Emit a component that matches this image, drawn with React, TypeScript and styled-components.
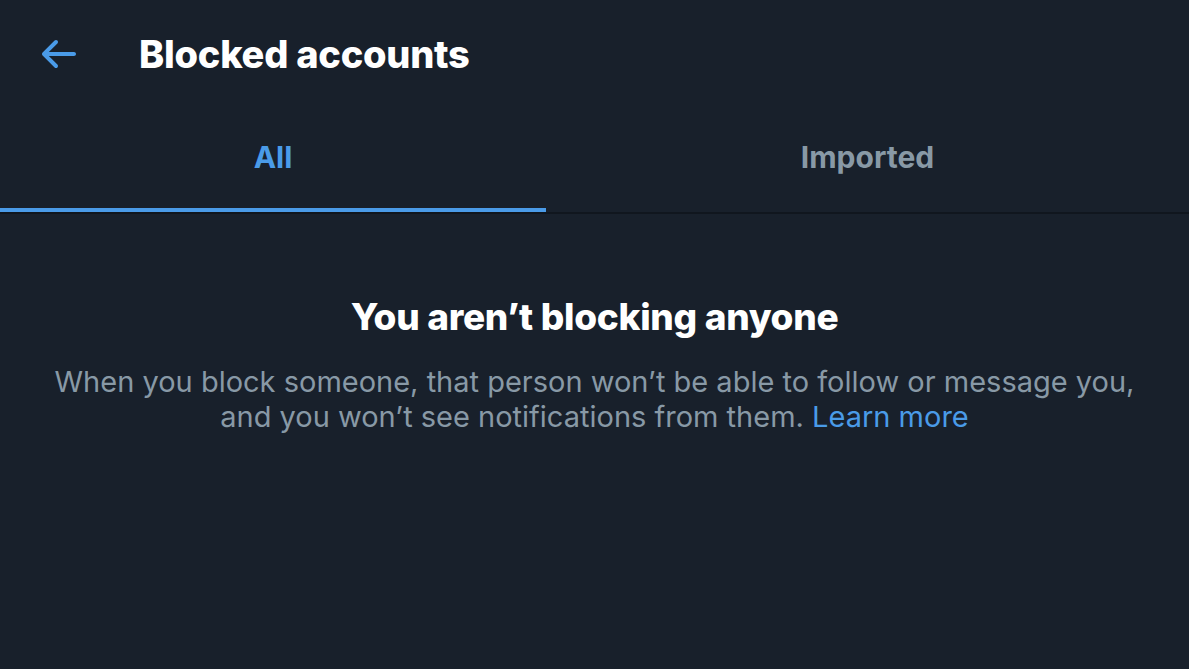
import React from "react";
import styled, { createGlobalStyle } from "styled-components";

const GlobalStyle = createGlobalStyle`
    html, body {
        margin: 0;
        padding: 0;
        background: #18202b;
    }
    body {
        font-family: Inter, "Noto Sans", sans-serif;
        -webkit-font-smoothing: antialiased;
    }
`;

const Page = styled.div`
    width: 1189px;
    height: 669px;
    background: #18202b;
    display: flex;
    flex-direction: column;
    overflow: hidden;
`;

const Header = styled.header`
    height: 106px;
    display: flex;
    align-items: center;
    padding-left: 34px;
    box-sizing: border-box;
`;

const BackButton = styled.button`
    width: 48px;
    height: 48px;
    padding: 0;
    border: none;
    background: transparent;
    color: #4a9be8;
    display: flex;
    align-items: center;
    justify-content: center;
    cursor: pointer;
    margin-top: 2px;

    svg {
        width: 48px;
        height: 48px;
    }
`;

const Title = styled.h1`
    margin: 2px 0 0 57px;
    font-size: 38px;
    font-weight: 800;
    color: #ffffff;
    letter-spacing: -0.25px;
`;

const TabBar = styled.nav`
    display: flex;
    height: 106px;
    border-bottom: 2px solid #10161e;
`;

const Tab = styled.div<{ $active?: boolean }>`
    flex: ${(p) => (p.$active ? "0 0 546px" : "1")};
    position: relative;
    display: flex;
    align-items: center;
    justify-content: center;
    font-size: 30px;
    font-weight: 700;
    color: ${(p) => (p.$active ? "#4a9be8" : "#8899a6")};
    padding-bottom: 4px;

    &::after {
        content: "";
        display: ${(p) => (p.$active ? "block" : "none")};
        position: absolute;
        left: 0;
        right: 0;
        bottom: 0;
        height: 4px;
        background: #4a9be8;
    }
`;

const Empty = styled.section`
    display: flex;
    flex-direction: column;
    align-items: center;
    text-align: center;
    padding-top: 80px;
`;

const EmptyTitle = styled.h2`
    margin: 0;
    font-size: 37px;
    font-weight: 800;
    color: #ffffff;
    letter-spacing: -0.3px;
`;

const EmptyText = styled.p`
    margin: 25px 0 0;
    font-size: 29px;
    line-height: 35px;
    font-weight: 400;
    color: #8899a6;
`;

const LearnMore = styled.a`
    color: #4a9be8;
    text-decoration: none;
`;

const ArrowIcon: React.FC = () => (
    <svg viewBox="0 0 24 24" fill="currentColor" aria-hidden="true">
        <path d="M20 11H7.414l4.293-4.293c.39-.39.39-1.023 0-1.414s-1.023-.39-1.414 0l-6 6c-.39.39-.39 1.023 0 1.414l6 6c.195.195.45.293.707.293s.512-.098.707-.293c.39-.39.39-1.023 0-1.414L7.414 13H20c.553 0 1-.447 1-1s-.447-1-1-1z" />
    </svg>
);

const App: React.FC = () => {
    return (
        <Page>
            <GlobalStyle />
            <Header>
                <BackButton aria-label="Back">
                    <ArrowIcon />
                </BackButton>
                <Title>Blocked accounts</Title>
            </Header>
            <TabBar>
                <Tab $active>All</Tab>
                <Tab>Imported</Tab>
            </TabBar>
            <Empty>
                <EmptyTitle>You aren’t blocking anyone</EmptyTitle>
                <EmptyText>
                    When you block someone, that person won’t be able to follow or message you,
                    <br />
                    and you won’t see notifications from them. <LearnMore href="#none">Learn more</LearnMore>
                </EmptyText>
            </Empty>
        </Page>
    );
};

export default App;
